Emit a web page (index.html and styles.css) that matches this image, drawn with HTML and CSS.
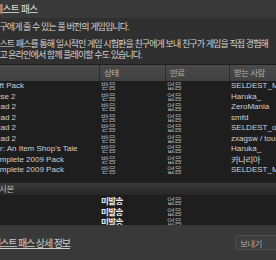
FILE: index.html
```html
<!DOCTYPE html>
<html lang="ko">
<head>
  <meta charset="utf-8">
  <title>게스트 패스</title>
  <link rel="stylesheet" href="styles.css">
</head>
<body>

<div class="dialog">
  <div class="titlebar">게스트 패스</div>

  <div class="intro">
    <p class="lead">친구에게 줄 수 있는 풀 버전의 게임입니다.</p>
    <p>게스트 패스를 통해 일시적인 게임 시험판을 친구에게 보내 친구가 게임을 직접 경험해<br>보고 온라인에서 함께 플레이할 수도 있습니다.</p>
  </div>

  <div class="list">
    <div class="row head">
      <span>게임</span><span>상태</span><span>만료</span><span>받는 사람</span>
    </div>
    <div class="row"><span>Mixed Gift Pack</span><span class="ko">받음</span><span class="ko">없음</span><span>SELDEST_MAIN</span></div>
    <div class="row"><span>Mystic Rise 2</span><span class="ko">받음</span><span class="ko">없음</span><span>Haruka_</span></div>
    <div class="row"><span>Left 4 Dead 2</span><span class="ko">받음</span><span class="ko">없음</span><span>ZeroMania</span></div>
    <div class="row"><span>Left 4 Dead 2</span><span class="ko">받음</span><span class="ko">없음</span><span>smfd</span></div>
    <div class="row"><span>Left 4 Dead 2</span><span class="ko">받음</span><span class="ko">없음</span><span>SELDEST_out</span></div>
    <div class="row"><span>Left 4 Dead 2</span><span class="ko">받음</span><span class="ko">없음</span><span>zxagsw / touch</span></div>
    <div class="row"><span>Recettear: An Item Shop's Tale</span><span class="ko">받음</span><span class="ko">없음</span><span>Haruka_</span></div>
    <div class="row"><span>Valve Complete 2009 Pack</span><span class="ko">받음</span><span class="ko">없음</span><span class="ko name">카나리아</span></div>
    <div class="row"><span>Valve Complete 2009 Pack</span><span class="ko">받음</span><span class="ko">없음</span><span>SELDEST_MAIN</span></div>

    <div class="group">복사본</div>
    <div class="row"><span>Portal</span><span class="ko new">미발송</span><span class="ko">없음</span><span></span></div>
    <div class="row"><span>Portal</span><span class="ko new">미발송</span><span class="ko">없음</span><span></span></div>
    <div class="row"><span>Portal</span><span class="ko new">미발송</span><span class="ko">없음</span><span></span></div>
  </div>

  <div class="footer">
    <a href="#">게스트 패스 상세 정보</a>
    <button>보내기</button>
  </div>
</div>

</body>
</html>
```

FILE: styles.css
```css
* {
  margin: 0;
  padding: 0;
  box-sizing: border-box;
}
body {
  background-color: #303030;
  overflow: hidden;
  font-family: "Liberation Sans", "Noto Sans CJK KR", sans-serif;
  color: #d0d0d0;
}
.dialog {
  width: 340px;
  height: 260px;
  margin-left: -44px;
  display: flex;
  flex-direction: column;
}
.titlebar {
  height: 18px;
  padding: 3.5px 0 0 38px;
  font-size: 10px;
  line-height: 12px;
  letter-spacing: -0.9px;
  color: #dedede;
  background-color: #393939;
}
.intro {
  height: 46px;
  padding: 3.5px 0 0 36px;
  font-size: 9px;
  line-height: 10.7px;
  letter-spacing: -0.9px;
  white-space: nowrap;
  color: #d2d2d2;
}
.intro .lead {
  margin-bottom: 6.7px;
}
.list {
  height: 161px;
  overflow: hidden;
  background-color: #1e1e1e;
  font-size: 8px;
}
.row {
  display: grid;
  grid-template-columns: 143px 66px 64px 1fr;
  height: 10.5px;
  line-height: 10.5px;
  white-space: nowrap;
}
.row span {
  padding-left: 2px;
  overflow: hidden;
}
.row span:first-child {
  padding-left: 12px;
}
.ko {
  font-size: 8.5px;
  letter-spacing: -0.6px;
}
.row .ko {
  color: #aaaaaa;
}
.row .name {
  color: #d0d0d0;
}
.row.head {
  height: 16px;
  margin-top: 1px;
  line-height: 16px;
  font-size: 8.5px;
  letter-spacing: -0.6px;
  background: linear-gradient(#4a4a4a, #414141);
  color: #b4b4b4;
}
.row.head span {
  padding-left: 4px;
}
.row.head span + span {
  border-left: 1px solid #2c2c2c;
}
.row .new {
  color: #ececec;
  font-weight: bold;
}
.group {
  height: 12px;
  margin: 7px 0 1.5px;
  padding-left: 36px;
  font-size: 8.5px;
  letter-spacing: -0.6px;
  line-height: 12px;
  color: #bcbcbc;
  background: linear-gradient(#3a3a3a, #262626);
}
.footer {
  flex: 1;
  display: flex;
  align-items: center;
  justify-content: space-between;
  padding: 0 11px 0 36px;
  background-color: #393939;
}
.footer a {
  font-size: 10px;
  letter-spacing: -1.1px;
  color: #cccccc;
}
.footer button {
  width: 50px;
  height: 15px;
  font-family: inherit;
  font-size: 8.5px;
  letter-spacing: -0.6px;
  text-align: left;
  padding-left: 4px;
  color: #a8a8a8;
  background-color: #3e3e3e;
  border: 1px solid #4e4e4e;
  border-radius: 2px;
}
```
